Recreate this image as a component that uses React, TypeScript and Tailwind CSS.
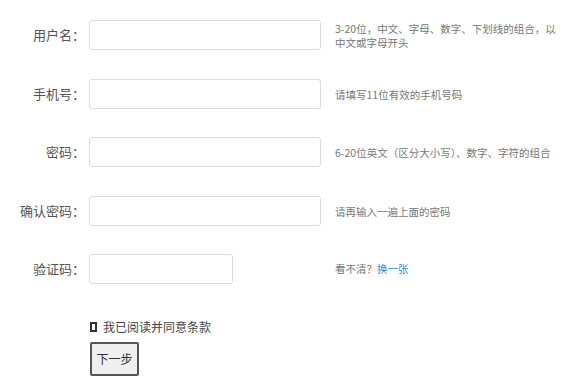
const rows = [
  { label: "用户名：", hint: ["3-20位，中文、字母、数字、下划线的组合，以", "中文或字母开头"] },
  { label: "手机号：", hint: ["请填写11位有效的手机号码"] },
  { label: "密码：", hint: ["6-20位英文（区分大小写）、数字、字符的组合"] },
  { label: "确认密码：", hint: ["请再输入一遍上面的密码"] },
];

const font = { fontFamily: '"Noto Sans CJK SC", "Noto Sans", sans-serif' };

export default function App() {
  return (
    <div className="min-h-[385px] w-[586px] bg-white pt-[20px]" style={font}>
      <div className="flex flex-col gap-[28.5px]">
        {rows.map((r) => (
          <div key={r.label} className="flex h-[30px] items-center">
            <label className="w-[85px] shrink-0 text-right text-[13px] text-[#555]">{r.label}</label>
            <input className="ml-[4px] h-[30px] w-[232px] shrink-0 rounded-[3px] border border-[#dcdcdc] bg-white outline-none" />
            <div className="ml-[14px] pt-[2px] text-[10.5px] leading-[14px] text-[#777]">
              {r.hint.map((h) => (
                <div key={h}>{h}</div>
              ))}
            </div>
          </div>
        ))}
        <div className="flex h-[30px] items-center">
          <label className="w-[85px] shrink-0 text-right text-[13px] text-[#555]">验证码：</label>
          <input className="ml-[4px] h-[30px] w-[144px] shrink-0 rounded-[3px] border border-[#dcdcdc] bg-white outline-none" />
          <div className="ml-[102px] text-[10.5px] text-[#777]">
            看不清？<a className="text-[#2f8ad6]">换一张</a>
          </div>
        </div>
      </div>
      <div className="mt-[35px] flex h-[16px] items-center gap-[6px] pl-[90px] text-[12px] text-[#444]">
        <span className="inline-block h-[10px] w-[7px] border-2 border-[#333]" />
        <span>我已阅读并同意条款</span>
      </div>
      <div className="mt-[7px] pl-[90px]">
        <button className="h-[34px] w-[49px] rounded-[2px] border-2 border-[#555] bg-[#efefef] text-[12px] text-[#333]">
          下一步
        </button>
      </div>
    </div>
  );
}
